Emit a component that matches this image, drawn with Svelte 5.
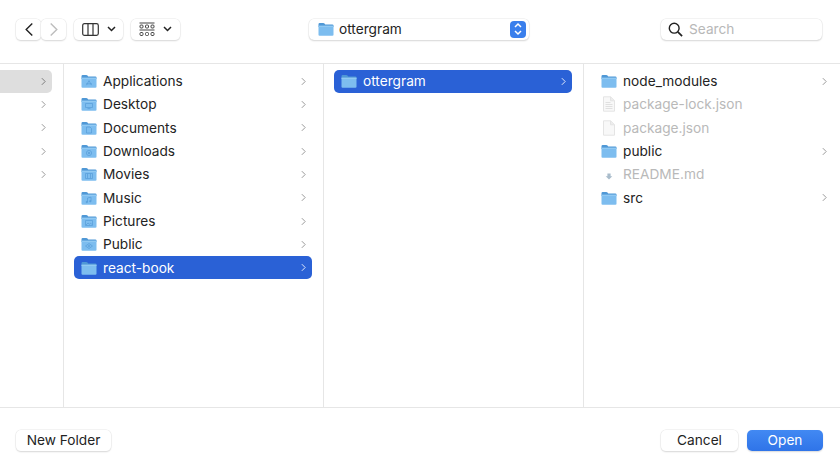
<script lang="ts">
	type Item = { name: string; kind?: string; dim?: boolean; file?: string; more?: boolean };

	const places: Item[] = [
		{ name: 'Applications', kind: 'apps', more: true },
		{ name: 'Desktop', kind: 'desktop', more: true },
		{ name: 'Documents', kind: 'docs', more: true },
		{ name: 'Downloads', kind: 'downloads', more: true },
		{ name: 'Movies', kind: 'movies', more: true },
		{ name: 'Music', kind: 'music', more: true },
		{ name: 'Pictures', kind: 'pictures', more: true },
		{ name: 'Public', kind: 'public', more: true },
		{ name: 'react-book', more: true }
	];

	const project: Item[] = [
		{ name: 'node_modules', more: true },
		{ name: 'package-lock.json', dim: true, file: 'lines' },
		{ name: 'package.json', dim: true, file: 'blank' },
		{ name: 'public', more: true },
		{ name: 'README.md', dim: true, file: 'md' },
		{ name: 'src', more: true }
	];

	const sidebarRows = [0, 1, 2, 3, 4];
</script>

{#snippet folder(kind?: string)}
	<svg class="icon" viewBox="0 0 16 16" width="16" height="16">
		<path d="M.5 3.200q0-1.200 1.200-1.200h3.600q.7 0 1.200.6l.7.8h7.100q1.200 0 1.200 1.200v1.400H.5z" fill="#4f98d6" />
		<path d="M.5 4.800h15v8.900q0 1.100-1.100 1.100H1.600q-1.100 0-1.100-1.100z" fill="#7dbdef" />
		<path d="M.5 4.800h15v.7H.5z" fill="#a6d5f5" />
		<g fill="none" stroke="#5a9fdb" stroke-width=".8">
			{#if kind === 'apps'}
				<path d="M5.500 12.200 8 7.600l2.500 4.600M5 10.800h6" />
			{:else if kind === 'desktop'}
				<path d="M4.500 7.500h7v4h-7zM6.500 12.600h3" />
			{:else if kind === 'docs'}
				<path d="M5.500 7h3.500l1.500 1.500V13h-5z" />
			{:else if kind === 'downloads'}
				<circle cx="8" cy="10" r="2.600" />
				<circle cx="8" cy="10" r=".8" fill="#5a9fdb" />
			{:else if kind === 'movies'}
				<path d="M4.500 7.500h7v5h-7zM6.500 7.500v5M9.500 7.500v5" />
			{:else if kind === 'music'}
				<path d="M6.500 12V8l3.500-.8v4" />
				<circle cx="5.800" cy="12" r=".7" fill="#5a9fdb" />
				<circle cx="9.300" cy="11.200" r=".7" fill="#5a9fdb" />
			{:else if kind === 'pictures'}
				<path d="M4.500 7.500h7v5h-7zM5 12l2-2 1.500 1.200 1.200-1 1.500 1.500" />
			{:else if kind === 'public'}
				<path d="M4.500 10 8 7.500l3.500 2.500L8 12.500z" />
				<circle cx="8" cy="10" r=".8" />
			{/if}
		</g>
	</svg>
{/snippet}

{#snippet doc(file?: string)}
	<svg class="icon" viewBox="0 0 16 16" width="16" height="16">
		{#if file === 'md'}
			<path d="M6.400 7.500h3.200v2.800h1.700L8 13.500l-3.300-3.200h1.700z" fill="#a9bccb" />
		{:else}
			<path d="M2.500.8h7.200l3.800 3.800v10.600H2.500z" fill="#f8f8f8" stroke="#e4e4e4" />
			<path d="M9.500.8v4h4" fill="#ededed" stroke="#e4e4e4" />
			{#if file === 'lines'}
				<path d="M4.500 6.500h5M4.500 8.500h7M4.500 10.500h7M4.500 12.500h7" stroke="#e0e0e0" stroke-width="1" />
			{/if}
		{/if}
	</svg>
{/snippet}

{#snippet chevron()}
	<svg class="chev" viewBox="0 0 6 10" width="5" height="9">
		<path d="M1 1l4 4-4 4" fill="none" stroke="currentColor" stroke-width="1.200" />
	</svg>
{/snippet}

{#snippet caret()}
	<svg viewBox="0 0 9 6" width="9" height="6">
		<path d="M1 1l3.500 3.500L8 1" fill="none" stroke="#222" stroke-width="1.500" />
	</svg>
{/snippet}

{#snippet row(item: Item, selected: boolean)}
	<div class="row" class:selected class:dim={item.dim}>
		{#if item.file}
			{@render doc(item.file)}
		{:else}
			{@render folder(item.kind)}
		{/if}
		<span class="name">{item.name}</span>
		{#if item.more}
			{@render chevron()}
		{/if}
	</div>
{/snippet}

<div class="dialog">
	<header class="toolbar">
		<div class="tools">
			<div class="nav">
				<button class="btn nav-btn" aria-label="Back">
					<svg viewBox="0 0 10 16" width="10" height="15">
						<path d="M8.500 1.500 2 8l6.500 6.500" fill="none" stroke="#222" stroke-width="1.500" />
					</svg>
				</button>
				<button class="btn nav-btn" aria-label="Forward">
					<svg viewBox="0 0 10 16" width="10" height="15">
						<path d="M1.500 1.500 8 8l-6.500 6.500" fill="none" stroke="#bdbdbd" stroke-width="1.500" />
					</svg>
				</button>
			</div>
			<button class="btn menu-btn" aria-label="View">
				<svg viewBox="0 0 17 13" width="17" height="13">
					<path
						d="M2.500.7h12q1.800 0 1.800 1.800v8q0 1.800-1.800 1.800h-12Q.7 12.300.7 10.500v-8Q.7.700 2.500.7zM6 .7v11.600M11 .7v11.600"
						fill="none"
						stroke="#333"
						stroke-width="1.200"
					/>
				</svg>
				{@render caret()}
			</button>
			<button class="btn menu-btn" aria-label="Group">
				<svg viewBox="0 0 16 15" width="16" height="15">
					<g fill="none" stroke="#444" stroke-width="1">
						<path d="M.5 1h15M.5 8h15" />
						<rect x="1" y="3" width="3" height="3" rx="1" />
						<rect x="6.500" y="3" width="3" height="3" rx="1" />
						<rect x="12" y="3" width="3" height="3" rx="1" />
						<rect x="1" y="10.500" width="3" height="3" rx="1" />
						<rect x="6.500" y="10.500" width="3" height="3" rx="1" />
						<rect x="12" y="10.500" width="3" height="3" rx="1" />
					</g>
				</svg>
				{@render caret()}
			</button>
		</div>

		<div class="path-popup">
			{@render folder()}
			<span>ottergram</span>
			<span class="stepper">
				<svg viewBox="0 0 10 14" width="10" height="14">
					<path d="M2 5l3-3 3 3M2 9l3 3 3-3" fill="none" stroke="#fff" stroke-width="1.500" />
				</svg>
			</span>
		</div>

		<div class="search">
			<svg viewBox="0 0 15 15" width="15" height="15">
				<circle cx="6.200" cy="6.200" r="4.900" fill="none" stroke="#222" stroke-width="1.400" />
				<path d="M9.800 9.800l4.300 4.300" stroke="#222" stroke-width="1.700" />
			</svg>
			<span>Search</span>
		</div>
	</header>

	<main class="columns">
		<section class="col col-first">
			{#each sidebarRows as i}
				<div class="row" class:parent={i === 0}>
					<span class="name"></span>
					{@render chevron()}
				</div>
			{/each}
		</section>
		<section class="col col-mid">
			{#each places as item}
				{@render row(item, item.name === 'react-book')}
			{/each}
		</section>
		<section class="col col-mid">
			{@render row({ name: 'ottergram', more: true }, true)}
		</section>
		<section class="col col-last">
			{#each project as item}
				{@render row(item, false)}
			{/each}
		</section>
	</main>

	<footer class="footer">
		<button class="btn text-btn new-folder">New Folder</button>
		<div class="actions">
			<button class="btn text-btn cancel">Cancel</button>
			<button class="btn text-btn open">Open</button>
		</div>
	</footer>
</div>

<style>
	:global(body) {
		background: #fff;
	}

	.dialog {
		width: 840px;
		height: 467px;
		display: flex;
		flex-direction: column;
		overflow: hidden;
		background: #fff;
		color: #232323;
		font-family: Inter, 'Liberation Sans', sans-serif;
		font-size: 13.7px;
	}

	.toolbar {
		flex: none;
		height: 64px;
		box-sizing: border-box;
		padding: 18.500px 18px 0 16px;
		display: grid;
		grid-template-columns: 1fr 220px 1fr;
		align-items: start;
		border-bottom: 1px solid #e6e6e6;
	}

	.tools {
		display: flex;
		gap: 8px;
	}

	.nav {
		display: flex;
	}

	.btn {
		box-sizing: border-box;
		height: 21px;
		padding: 0;
		display: flex;
		align-items: center;
		justify-content: center;
		background: #fff;
		border: none;
		border-radius: 5px;
		box-shadow:
			0 0 0 0.5px #e8e8e8,
			0 1px 1.500px rgba(0, 0, 0, 0.2);
		font: inherit;
		color: inherit;
	}

	.nav-btn {
		width: 25px;
	}

	.menu-btn {
		width: 49px;
		gap: 8px;
	}

	.path-popup {
		box-sizing: border-box;
		height: 21px;
		padding: 0 3px 0 9px;
		display: flex;
		align-items: center;
		gap: 5px;
		border-radius: 5px;
		box-shadow:
			0 0 0 0.5px #e8e8e8,
			0 1px 1.500px rgba(0, 0, 0, 0.2);
	}

	.stepper {
		margin-left: auto;
		width: 16px;
		height: 17px;
		display: flex;
		align-items: center;
		justify-content: center;
		background: #3a7fec;
		border-radius: 4px;
	}

	.search {
		justify-self: end;
		box-sizing: border-box;
		width: 161px;
		height: 21px;
		padding: 0 7px;
		display: flex;
		align-items: center;
		gap: 6px;
		color: #b8b8b8;
		border-radius: 5px;
		box-shadow:
			0 0 0 0.5px #e8e8e8,
			0 1px 1.500px rgba(0, 0, 0, 0.2);
	}

	.columns {
		flex: none;
		height: 344px;
		box-sizing: border-box;
		display: flex;
		border-bottom: 1px solid #e6e6e6;
	}

	.col {
		box-sizing: border-box;
		padding: 5.500px 11px 0 10px;
		border-right: 1px solid #e6e6e6;
	}

	.col-first {
		width: 64px;
		padding-left: 0;
	}

	.col-mid {
		width: 260px;
	}

	.col-last {
		flex: 1;
		padding-right: 7px;
		border-right: none;
	}

	.row {
		height: 23.330px;
		padding: 0 6px 0 7px;
		display: flex;
		align-items: center;
		gap: 6px;
		box-sizing: border-box;
		border-radius: 5px;
		color: #232323;
	}

	.name {
		flex: 1;
		white-space: nowrap;
	}

	.chev {
		flex: none;
		color: #9a9a9a;
	}

	.parent {
		background: #dedede;
		border-radius: 0 5px 5px 0;
	}

	.parent .chev {
		color: #7d7d7d;
	}

	.selected {
		background: #2a61d6;
		color: #fff;
	}

	.selected .chev {
		color: #dfe8fb;
	}

	.dim {
		color: #b9b9b9;
	}

	.footer {
		flex: 1;
		padding: 21.500px 17px 0 16px;
		display: flex;
		justify-content: space-between;
		align-items: flex-start;
	}

	.actions {
		display: flex;
		gap: 9px;
	}

	.new-folder {
		width: 95px;
	}

	.cancel {
		width: 77px;
	}

	.open {
		width: 76px;
		background: linear-gradient(#4289f3, #2f74e8);
		box-shadow: 0 1px 1.500px rgba(0, 0, 0, 0.15);
		color: #fff;
	}
</style>
